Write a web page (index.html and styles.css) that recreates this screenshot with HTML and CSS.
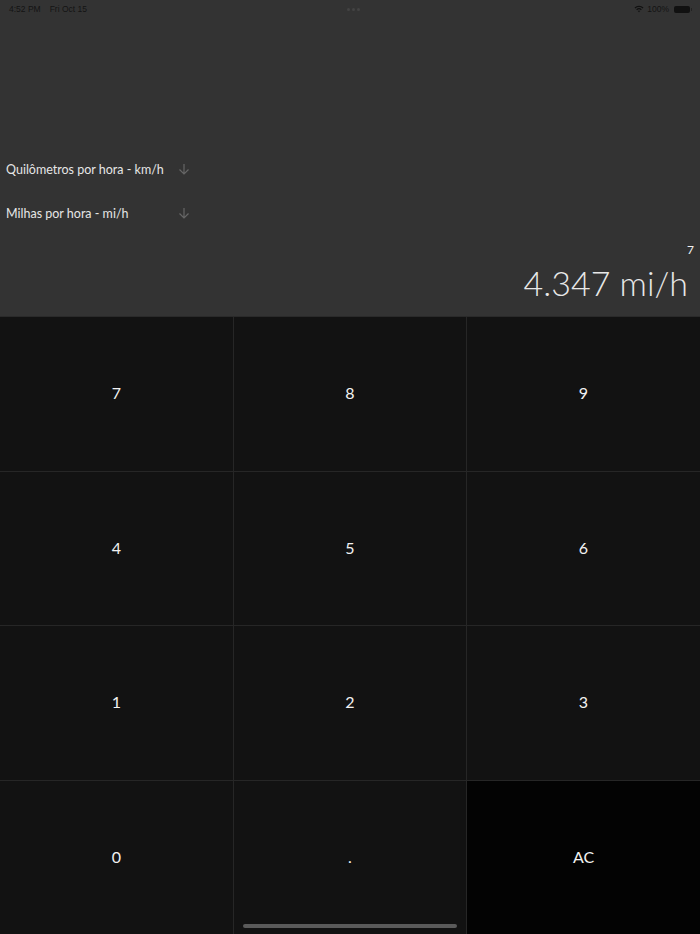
FILE: index.html
```html
<!DOCTYPE html>
<html lang="pt">

<head>
    <meta charset="UTF-8">
    <meta name="viewport" content="width=device-width, initial-scale=1.0">
    <title>Conversor de velocidade</title>
    <link rel="stylesheet" href="styles.css">
</head>

<body>
    <!-- Top display -->
    <div class="display">
        <div class="status-bar">
            <div class="status-left">
                <span>4:52 PM</span>
                <span>Fri Oct 15</span>
            </div>
            <div class="status-dots">
                <i></i><i></i><i></i>
            </div>
            <div class="status-right">
                <svg class="wifi" width="10" height="8" viewBox="0 0 10 8">
                    <path d="M0.5 2.6 A6.5 6.5 0 0 1 9.5 2.6 L8.6 3.5 A5.2 5.2 0 0 0 1.4 3.5 Z" fill="#111" />
                    <path d="M2.2 4.3 A4 4 0 0 1 7.8 4.3 L6.9 5.2 A2.7 2.7 0 0 0 3.1 5.2 Z" fill="#111" />
                    <path d="M3.9 6 A1.6 1.6 0 0 1 6.1 6 L5 7.2 Z" fill="#111" />
                </svg>
                <span>100%</span>
                <div class="battery"></div>
            </div>
        </div>

        <div class="units">
            <div class="unit-row">
                <span>Quilômetros por hora - km/h</span>
                <svg class="arrow" width="12" height="12" viewBox="0 0 12 12">
                    <path d="M6 1 V11 M1.5 6.5 L6 11 L10.5 6.5" stroke="#666" stroke-width="1.2" fill="none" />
                </svg>
            </div>
            <div class="unit-row">
                <span>Milhas por hora - mi/h</span>
                <svg class="arrow" width="12" height="12" viewBox="0 0 12 12">
                    <path d="M6 1 V11 M1.5 6.5 L6 11 L10.5 6.5" stroke="#666" stroke-width="1.2" fill="none" />
                </svg>
            </div>
        </div>

        <div class="result">
            <div class="input-value">7</div>
            <div class="output-value">4.347 mi/h</div>
        </div>
    </div>

    <!-- Keypad -->
    <div class="keypad">
        <div class="key">7</div>
        <div class="key">8</div>
        <div class="key">9</div>
        <div class="key">4</div>
        <div class="key">5</div>
        <div class="key">6</div>
        <div class="key">1</div>
        <div class="key">2</div>
        <div class="key">3</div>
        <div class="key">0</div>
        <div class="key">.</div>
        <div class="key key-clear">AC</div>
    </div>

    <div class="home-indicator"></div>
</body>

</html>
```

FILE: styles.css
```css
/* General Reset */
* {
    margin: 0;
    padding: 0;
    box-sizing: border-box;
}

body {
    font-family: 'Lato', 'Open Sans', sans-serif;
    background-color: #121212;
    color: #fff;
    width: 700px;
    height: 934px;
    overflow: hidden;
    display: flex;
    flex-direction: column;
    position: relative;
}

/* Top display */
.display {
    background-color: #333333;
    height: 317px;
    border-bottom: 1px solid #2a2a2a;
    display: flex;
    flex-direction: column;
}

.status-bar {
    height: 18px;
    display: flex;
    justify-content: space-between;
    align-items: center;
    padding: 0 10px 0 9px;
    font-family: 'Liberation Sans', sans-serif;
    font-size: 8.5px;
    color: #141414;
}

.status-left {
    display: flex;
    gap: 9px;
    width: 120px;
}

.status-dots {
    display: flex;
    gap: 2px;
    margin-left: 8px;
}

.status-dots i {
    width: 3px;
    height: 3px;
    border-radius: 50%;
    background: #444;
}

.status-right {
    display: flex;
    align-items: center;
    gap: 3px;
    width: 120px;
    justify-content: flex-end;
}

.battery {
    width: 16px;
    height: 7px;
    border-radius: 2px;
    background: #111;
    margin-left: 2px;
    position: relative;
}

.battery::after {
    content: '';
    position: absolute;
    right: -2px;
    top: 2px;
    width: 1px;
    height: 3px;
    background: #222;
}

/* Unit selectors */
.units {
    margin-top: 143px;
    display: flex;
    flex-direction: column;
    gap: 28px;
    padding-left: 6px;
}

.unit-row {
    display: flex;
    align-items: center;
    width: 184px;
    justify-content: space-between;
    height: 16px;
    font-size: 12.5px;
    color: #e6e6e6;
}

/* Result */
.result {
    margin-top: auto;
    padding: 0 12px 13px 0;
    text-align: right;
}

.input-value {
    font-size: 12px;
    color: #f0f0f0;
    margin-right: -6px;
    line-height: 14px;
}

.output-value {
    font-family: 'Lato', sans-serif;
    font-weight: 300;
    font-size: 34px;
    color: #e8e8e8;
    line-height: 40px;
    margin-top: 6px;
}

/* Keypad */
.keypad {
    flex: 1;
    display: grid;
    grid-template-columns: 233px 232px 233px;
    grid-template-rows: repeat(4, 1fr);
    background-color: #262626;
    gap: 1px;
}

.key {
    background-color: #121212;
    display: flex;
    justify-content: center;
    align-items: center;
    font-size: 16px;
    color: #f2f2f2;
    padding-bottom: 2px;
}

.key-clear {
    background-color: #030303;
}

.home-indicator {
    position: absolute;
    bottom: 6px;
    left: 243px;
    width: 214px;
    height: 4px;
    border-radius: 2px;
    background: #5a5a5a;
}
```
